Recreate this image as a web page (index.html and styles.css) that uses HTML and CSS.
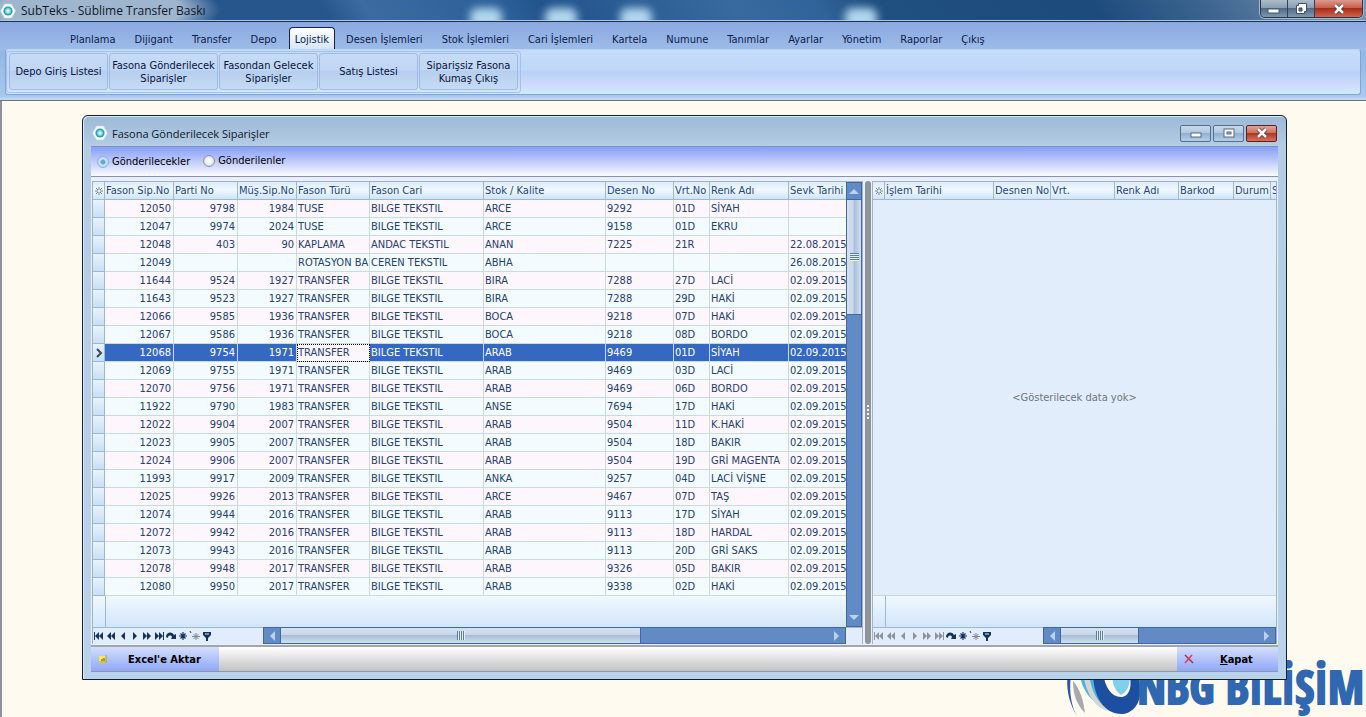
FILE: index.html
```html
<!DOCTYPE html>
<html lang="tr">
<head>
    <meta charset="UTF-8">
    <meta name="viewport" content="width=device-width, initial-scale=1.0">
    <title>SubTeks - Süblime Transfer Baskı</title>
    <link rel="stylesheet" href="styles.css">
</head>
<body>

<!-- Shared icons -->
<svg class="defs" width="0" height="0" aria-hidden="true">
    <symbol id="i-app" viewBox="0 0 16 16">
        <path d="M4.500 1h7l4 7-4 7h-7l-4-7z" fill="#f4fbfc" stroke="#c3d9e2" stroke-width=".6"/>
        <circle cx="8" cy="8" r="4.600" fill="#2f9fae"/>
        <circle cx="8" cy="8" r="3" fill="#7fd3d8"/>
        <path d="M6 8l2-2 2 2-2 2z" fill="#dff6f6"/>
    </symbol>
    <symbol id="i-first" viewBox="0 0 12 10"><path d="M1 1h1v8H1zM6 1v8L2 5zM10 1v8L6 5z"/></symbol>
    <symbol id="i-prevpage" viewBox="0 0 12 10"><path d="M6 1v8L2 5zM10 1v8L6 5z"/></symbol>
    <symbol id="i-prev" viewBox="0 0 12 10"><path d="M8 1v8L4 5z"/></symbol>
    <symbol id="i-next" viewBox="0 0 12 10"><path d="M4 1v8l4-4z"/></symbol>
    <symbol id="i-nextpage" viewBox="0 0 12 10"><path d="M2 1v8l4-4zM6 1v8l4-4z"/></symbol>
    <symbol id="i-last" viewBox="0 0 12 10"><path d="M2 1v8l4-4zM6 1v8l4-4zM10 1h1v8h-1z"/></symbol>
    <symbol id="i-refresh" viewBox="0 0 12 10"><path d="M1 6c0-5 6-6 8-2l2-1v5H6l1-2C6 4 3 4 3 7z"/></symbol>
    <symbol id="i-star" viewBox="0 0 12 10"><path d="M6 1v8M2 5h8M3.500 2.500l5 5M8.500 2.500l-5 5" stroke="currentColor" stroke-width="1.200"/></symbol>
    <symbol id="i-starq" viewBox="0 0 12 10"><path d="M1 0l1 2" stroke="#1f3f7a"/><path d="M7 2v7M3 5.500h8M4.500 3l5 5M9.500 3l-5 5" stroke="#7d8794" stroke-width="1"/></symbol>
    <symbol id="i-stargrid" viewBox="0 0 12 10"><path d="M6 1v8M2 5h8M3 2l6 6M9 2L3 8" stroke="#6f8299" stroke-width="1"/><circle cx="6" cy="5" r="1.200" fill="#e8f2fc"/></symbol>
    <symbol id="i-filter" viewBox="0 0 12 10"><path d="M2 1h8v3L7 7v3H5V7L2 4zM4 2.500v1h4v-1z" fill-rule="evenodd"/></symbol>
</svg>

<header class="titlebar">
    <span class="blob b1"></span><span class="blob b2"></span><span class="blob b3"></span><span class="blob b4"></span>
    <svg class="app-icon"><use href="#i-app"/></svg>
    <span class="title">SubTeks - Süblime Transfer Baskı</span>
    <div class="win-buttons">
        <button type="button" class="wb" aria-label="Simge durumuna küçült">
            <svg width="14" height="12"><rect x="1" y="6" width="11" height="4" fill="#fff" stroke="#455b73"/></svg>
        </button>
        <button type="button" class="wb" aria-label="Önceki boyut">
            <svg width="14" height="14"><path d="M4.500 1.500h8v8h-2v2h-8v-8h2z" fill="#fff" stroke="#3d4f63"/><path d="M5 6h3v3H5z" fill="#536b85" stroke="#3d4f63"/></svg>
        </button>
        <button type="button" class="wb wb-close" aria-label="Kapat">
            <svg width="14" height="12"><path d="M3 2l8 8M11 2l-8 8" stroke="#5d2b2b" stroke-width="4"/><path d="M3 2l8 8M11 2l-8 8" stroke="#fff" stroke-width="2.500"/></svg>
        </button>
    </div>
</header>

<div class="ribbon">
    <nav class="menu">
        <a href="#">Planlama</a>
        <a href="#">Dijigant</a>
        <a href="#">Transfer</a>
        <a href="#">Depo</a>
        <a href="#" class="active">Lojistik</a>
        <a href="#">Desen İşlemleri</a>
        <a href="#">Stok İşlemleri</a>
        <a href="#">Cari İşlemleri</a>
        <a href="#">Kartela</a>
        <a href="#">Numune</a>
        <a href="#">Tanımlar</a>
        <a href="#">Ayarlar</a>
        <a href="#">Yönetim</a>
        <a href="#">Raporlar</a>
        <a href="#">Çıkış</a>
    </nav>
    <div class="panel">
        <div class="group">
            <button type="button">Depo Giriş Listesi</button>
            <button type="button" class="wide">Fasona Gönderilecek<br>Siparişler</button>
            <button type="button">Fasondan Gelecek<br>Siparişler</button>
            <button type="button">Satış Listesi</button>
            <button type="button">Siparişsiz Fasona<br>Kumaş Çıkış</button>
        </div>
    </div>
</div>

<main class="desktop">

    <!-- Company logo on the desktop -->
    <div class="logo">
        <svg width="84" height="64" viewBox="0 0 84 64">
            <path d="M16 0C4 14 2 40 16 63c-10-18-8-44 0-63z" fill="#2459a8"/>
            <path d="M12 28c0 14 4 24 12 32-2-14-5-24-12-32z" fill="#a9a9ad"/>
            <path d="M18 20h20l10 34C32 52 22 40 18 20z" fill="#49b7e0"/>
            <path d="M28 20c2 20 10 32 22 38-12 0-24-12-28-38z" fill="#d8d4d2"/>
            <path d="M32 20c0 24 12 42 30 41 16-2 22-22 14-41h-8c4 14 0 24-8 24-10 0-16-10-18-24z" fill="#1c4f9f"/>
            <path d="M52 18c-2 12 2 20 8 24 8-4 10-14 8-24z" fill="#7fd0ea"/>
        </svg>
        <span>NBG BİLİŞİM</span>
    </div>

    <section class="window">
        <div class="window-title">
            <svg class="app-icon"><use href="#i-app"/></svg>
            <h1>Fasona Gönderilecek Siparişler</h1>
            <div class="mdi-buttons">
                <button type="button" aria-label="Küçült">
                    <svg width="14" height="12"><rect x="2" y="6" width="10" height="4" fill="#fff" stroke="#566a80"/></svg>
                </button>
                <button type="button" aria-label="Büyüt">
                    <svg width="14" height="12"><rect x="2" y="2" width="10" height="8" fill="#fff" stroke="#566a80"/><rect x="5" y="5" width="4" height="2" fill="#9fb9d6" stroke="#566a80"/></svg>
                </button>
                <button type="button" class="close" aria-label="Pencereyi kapat">
                    <svg width="14" height="12"><path d="M3 2l8 8M11 2l-8 8" stroke="#6d3030" stroke-width="4"/><path d="M3 2l8 8M11 2l-8 8" stroke="#fff" stroke-width="2.500"/></svg>
                </button>
            </div>
        </div>

        <div class="options">
            <label class="opt"><input type="radio" name="durum" checked>Gönderilecekler</label>
            <label class="opt"><input type="radio" name="durum">Gönderilenler</label>
        </div>

        <div class="grids">
            <div class="grid grid-left">
                <div class="grid-main">
                    <div class="grid-body">
                        <table>
                            <colgroup>
                                <col class="w12"><col class="w69"><col class="w64"><col class="w59"><col class="w73"><col class="w114"><col class="w122"><col class="w68"><col class="w36"><col class="w79"><col>
                            </colgroup>
                            <thead>
                                <tr><th class="ind"><svg class="ico"><use href="#i-stargrid"/></svg></th><th>Fason Sip.No</th><th>Parti No</th><th>Müş.Sip.No</th><th>Fason Türü</th><th>Fason Cari</th><th>Stok / Kalite</th><th>Desen No</th><th>Vrt.No</th><th>Renk Adı</th><th>Sevk Tarihi</th></tr>
                            </thead>
                            <tbody>
                                <tr><td></td><td>12050</td><td>9798</td><td>1984</td><td>TUSE</td><td>BILGE TEKSTIL</td><td>ARCE</td><td>9292</td><td>01D</td><td>SİYAH</td><td></td></tr>
                                <tr><td></td><td>12047</td><td>9974</td><td>2024</td><td>TUSE</td><td>BILGE TEKSTIL</td><td>ARCE</td><td>9158</td><td>01D</td><td>EKRU</td><td></td></tr>
                                <tr><td></td><td>12048</td><td>403</td><td>90</td><td>KAPLAMA</td><td>ANDAC TEKSTIL</td><td>ANAN</td><td>7225</td><td>21R</td><td></td><td>22.08.2015</td></tr>
                                <tr><td></td><td>12049</td><td></td><td></td><td>ROTASYON BA</td><td>CEREN TEKSTIL</td><td>ABHA</td><td></td><td></td><td></td><td>26.08.2015</td></tr>
                                <tr><td></td><td>11644</td><td>9524</td><td>1927</td><td>TRANSFER</td><td>BILGE TEKSTIL</td><td>BIRA</td><td>7288</td><td>27D</td><td>LACİ</td><td>02.09.2015</td></tr>
                                <tr><td></td><td>11643</td><td>9523</td><td>1927</td><td>TRANSFER</td><td>BILGE TEKSTIL</td><td>BIRA</td><td>7288</td><td>29D</td><td>HAKİ</td><td>02.09.2015</td></tr>
                                <tr><td></td><td>12066</td><td>9585</td><td>1936</td><td>TRANSFER</td><td>BILGE TEKSTIL</td><td>BOCA</td><td>9218</td><td>07D</td><td>HAKİ</td><td>02.09.2015</td></tr>
                                <tr><td></td><td>12067</td><td>9586</td><td>1936</td><td>TRANSFER</td><td>BILGE TEKSTIL</td><td>BOCA</td><td>9218</td><td>08D</td><td>BORDO</td><td>02.09.2015</td></tr>
                                <tr class="selected"><td><svg class="row-arrow" viewBox="0 0 8 10"><path d="M2 1l4 4-4 4" fill="none" stroke="#3a4a5c" stroke-width="2"/></svg></td><td>12068</td><td>9754</td><td>1971</td><td class="focus">TRANSFER</td><td>BILGE TEKSTIL</td><td>ARAB</td><td>9469</td><td>01D</td><td>SİYAH</td><td>02.09.2015</td></tr>
                                <tr><td></td><td>12069</td><td>9755</td><td>1971</td><td>TRANSFER</td><td>BILGE TEKSTIL</td><td>ARAB</td><td>9469</td><td>03D</td><td>LACİ</td><td>02.09.2015</td></tr>
                                <tr><td></td><td>12070</td><td>9756</td><td>1971</td><td>TRANSFER</td><td>BILGE TEKSTIL</td><td>ARAB</td><td>9469</td><td>06D</td><td>BORDO</td><td>02.09.2015</td></tr>
                                <tr><td></td><td>11922</td><td>9790</td><td>1983</td><td>TRANSFER</td><td>BILGE TEKSTIL</td><td>ANSE</td><td>7694</td><td>17D</td><td>HAKİ</td><td>02.09.2015</td></tr>
                                <tr><td></td><td>12022</td><td>9904</td><td>2007</td><td>TRANSFER</td><td>BILGE TEKSTIL</td><td>ARAB</td><td>9504</td><td>11D</td><td>K.HAKİ</td><td>02.09.2015</td></tr>
                                <tr><td></td><td>12023</td><td>9905</td><td>2007</td><td>TRANSFER</td><td>BILGE TEKSTIL</td><td>ARAB</td><td>9504</td><td>18D</td><td>BAKIR</td><td>02.09.2015</td></tr>
                                <tr><td></td><td>12024</td><td>9906</td><td>2007</td><td>TRANSFER</td><td>BILGE TEKSTIL</td><td>ARAB</td><td>9504</td><td>19D</td><td>GRİ MAGENTA</td><td>02.09.2015</td></tr>
                                <tr><td></td><td>11993</td><td>9917</td><td>2009</td><td>TRANSFER</td><td>BILGE TEKSTIL</td><td>ANKA</td><td>9257</td><td>04D</td><td>LACİ VİŞNE</td><td>02.09.2015</td></tr>
                                <tr><td></td><td>12025</td><td>9926</td><td>2013</td><td>TRANSFER</td><td>BILGE TEKSTIL</td><td>ARCE</td><td>9467</td><td>07D</td><td>TAŞ</td><td>02.09.2015</td></tr>
                                <tr><td></td><td>12074</td><td>9944</td><td>2016</td><td>TRANSFER</td><td>BILGE TEKSTIL</td><td>ARAB</td><td>9113</td><td>17D</td><td>SİYAH</td><td>02.09.2015</td></tr>
                                <tr><td></td><td>12072</td><td>9942</td><td>2016</td><td>TRANSFER</td><td>BILGE TEKSTIL</td><td>ARAB</td><td>9113</td><td>18D</td><td>HARDAL</td><td>02.09.2015</td></tr>
                                <tr><td></td><td>12073</td><td>9943</td><td>2016</td><td>TRANSFER</td><td>BILGE TEKSTIL</td><td>ARAB</td><td>9113</td><td>20D</td><td>GRİ SAKS</td><td>02.09.2015</td></tr>
                                <tr><td></td><td>12078</td><td>9948</td><td>2017</td><td>TRANSFER</td><td>BILGE TEKSTIL</td><td>ARAB</td><td>9326</td><td>05D</td><td>BAKIR</td><td>02.09.2015</td></tr>
                                <tr><td></td><td>12080</td><td>9950</td><td>2017</td><td>TRANSFER</td><td>BILGE TEKSTIL</td><td>ARAB</td><td>9338</td><td>02D</td><td>HAKİ</td><td>02.09.2015</td></tr>
                            </tbody>
                        </table>
                        <div class="grid-footer"></div>
                    </div>
                    <div class="vscroll">
                        <button type="button" aria-label="Yukarı"><svg width="10" height="6"><path d="M0 6l5-5 5 5z"/></svg></button>
                        <div class="thumb"><i></i></div>
                        <button type="button" class="end" aria-label="Aşağı"><svg width="10" height="6"><path d="M0 0l5 5 5-5z"/></svg></button>
                    </div>
                </div>
                <div class="grid-nav">
                    <div class="nav-icons">
                        <svg class="ico"><use href="#i-first"/></svg><svg class="ico"><use href="#i-prevpage"/></svg><svg class="ico"><use href="#i-prev"/></svg><svg class="ico"><use href="#i-next"/></svg><svg class="ico"><use href="#i-nextpage"/></svg><svg class="ico"><use href="#i-last"/></svg><svg class="ico"><use href="#i-refresh"/></svg><svg class="ico"><use href="#i-star"/></svg><svg class="ico"><use href="#i-starq"/></svg><svg class="ico"><use href="#i-filter"/></svg>
                    </div>
                    <div class="hscroll">
                        <button type="button" aria-label="Sola"><svg width="6" height="10"><path d="M6 0L1 5l5 5z"/></svg></button>
                        <div class="thumb thumb-long"><i></i></div>
                        <button type="button" class="end" aria-label="Sağa"><svg width="6" height="10"><path d="M0 0l5 5-5 5z"/></svg></button>
                    </div>
                    <div class="corner"></div>
                </div>
            </div>

            <div class="splitter"><i></i></div>

            <div class="grid grid-right">
                <div class="grid-main">
                    <div class="grid-body">
                        <table>
                            <colgroup>
                                <col class="w12"><col class="w109"><col class="w57"><col class="w64"><col class="w64"><col class="w55"><col class="w37"><col>
                            </colgroup>
                            <thead>
                                <tr><th class="ind"><svg class="ico"><use href="#i-stargrid"/></svg></th><th>İşlem Tarihi</th><th>Desnen No</th><th>Vrt.</th><th>Renk Adı</th><th>Barkod</th><th>Durum</th><th>S</th></tr>
                            </thead>
                        </table>
                        <div class="empty">&lt;Gösterilecek data yok&gt;</div>
                        <div class="grid-footer"></div>
                    </div>
                </div>
                <div class="grid-nav">
                    <div class="nav-icons">
                        <svg class="ico off"><use href="#i-first"/></svg><svg class="ico off"><use href="#i-prevpage"/></svg><svg class="ico off"><use href="#i-prev"/></svg><svg class="ico off"><use href="#i-next"/></svg><svg class="ico off"><use href="#i-nextpage"/></svg><svg class="ico off"><use href="#i-last"/></svg><svg class="ico"><use href="#i-refresh"/></svg><svg class="ico"><use href="#i-star"/></svg><svg class="ico"><use href="#i-starq"/></svg><svg class="ico"><use href="#i-filter"/></svg>
                    </div>
                    <div class="hscroll">
                        <button type="button" aria-label="Sola"><svg width="6" height="10"><path d="M6 0L1 5l5 5z"/></svg></button>
                        <div class="thumb"><i></i></div>
                        <button type="button" class="end" aria-label="Sağa"><svg width="6" height="10"><path d="M0 0l5 5-5 5z"/></svg></button>
                    </div>
                </div>
            </div>
        </div>

        <div class="actions">
            <button type="button" class="excel">
                <svg width="12" height="12"><path d="M1 3h7v7H1z" fill="#f5ec4c"/><path d="M1 9h8M8 2v7" stroke="#b09a3a"/><path d="M3 7h2M6 5v3" stroke="#4c4c3c"/></svg>
                <span>Excel'e Aktar</span>
            </button>
            <button type="button" class="exit">
                <svg width="12" height="12"><path d="M2 2l8 8" stroke="#a52a5a" stroke-width="1.500"/><path d="M9 2L2 10" stroke="#e03a4a" stroke-width="1.500"/></svg>
                <span><u>K</u>apat</span>
            </button>
        </div>
    </section>
</main>

</body>
</html>
```

FILE: styles.css
```css
* {
    box-sizing: border-box;
}

body {
    margin: 0;
    min-height: 100vh;
    display: flex;
    flex-direction: column;
    font-family: "DejaVu Sans Condensed", "DejaVu Sans", sans-serif;
    font-size: 11px;
    line-height: 13px;
    color: #0c1c3c;
    background: #fffaf0;
}

button {
    font: inherit;
    color: inherit;
    padding: 0;
    margin: 0;
    cursor: pointer;
}

svg {
    display: block;
}

.defs {
    position: absolute;
}

.app-icon {
    position: relative;
    width: 16px;
    height: 16px;
    flex: none;
}

/* Main title bar */
.titlebar {
    position: relative;
    height: 22px;
    flex: none;
    display: flex;
    align-items: center;
    overflow: hidden;
    border-bottom: 1px solid #1c2f4f;
    box-shadow: inset 0 -1px 0 #a9c6e4;
    background:
        radial-gradient(ellipse 130px 36px at 90px 10px, rgba(172, 192, 214, 0.9) 70%, rgba(172, 192, 214, 0) 100%),
        linear-gradient(60deg, transparent 24%, #3b6ba1 27%, #2d6098 37%, #22548c 40%, #386a9e 54%, #30639a 60%, #20507f 64%, #1d4b7c 80%, #3c648f 88%, #7d98b5 100%),
        #27568c;
}

.title {
    position: relative;
    margin-left: 5px;
    font-family: "Open Sans", "Noto Sans", sans-serif;
    font-size: 12px;
    color: #101828;
}

.blob {
    position: absolute;
    top: 8px;
    width: 32px;
    height: 20px;
    border-radius: 8px;
    background: #b2d6ee;
    filter: blur(4px);
}

.b1 { left: 470px; }
.b2 { left: 545px; }
.b3 { left: 620px; }
.b4 { left: 845px; }

.win-buttons {
    position: relative;
    display: flex;
    align-self: flex-start;
    height: 18px;
    margin-left: auto;
    margin-right: 3px;
    border: 1px solid #23364e;
    border-top: none;
    border-radius: 0 0 5px 5px;
    box-shadow: 0 0 0 1px #a8b9cb;
    overflow: hidden;
}

.wb {
    width: 27px;
    display: flex;
    align-items: center;
    justify-content: center;
    border: none;
    border-right: 1px solid #2f435c;
    background: linear-gradient(#aebccb 0, #8c9eb3 45%, #536b87 50%, #7f97ae 100%);
}

.wb-close {
    width: 47px;
    border-right: none;
    background: linear-gradient(#dc9a8c 0, #c8604c 45%, #a82c18 50%, #d0644c 100%);
}

/* Ribbon */
.ribbon {
    flex: none;
    height: 79px;
    padding: 5px 5px 0;
    background: linear-gradient(#8aa9e0 0, #9dbbe8 27px, #94b8e4 30px, #a6c8ee 74px, #c6dcf4 78px);
    border-bottom: 1px solid #6c7078;
}

.menu {
    display: flex;
    height: 22px;
    padding-left: 56px;
    white-space: nowrap;
}

.menu a {
    padding: 6px 10px 0 9px;
    color: #0c1c4c;
    text-decoration: none;
}

.menu .active {
    padding: 5px 5px 0;
    margin: 0 2px;
    border: 1px solid #152447;
    border-bottom: none;
    border-radius: 4px 4px 0 0;
    background: linear-gradient(#fff, #d5e5fa);
}

.panel {
    height: 46px;
    border: 1px solid #7ea6d2;
    border-top-color: #b9d4f4;
    border-radius: 3px;
    background: linear-gradient(#c5dcfb 0, #c0d8f8 45%, #bad0f8 50%, #cedcfc 80%, #cdeafc 100%);
}

.group {
    display: inline-flex;
    gap: 1px;
    margin: 1px 0 0;
    padding: 1px 2px 2px;
    border: 1px solid #a5c2e6;
    border-radius: 3px;
}

.group button {
    width: 99px;
    height: 37px;
    border: 1px solid #9fbce0;
    border-radius: 3px;
    color: #08143c;
    background: linear-gradient(#c6dbf6 0, #c0d6f3 45%, #b6ceef 50%, #c6dbf4 100%);
    white-space: nowrap;
}

.group .wide {
    width: 109px;
}

/* Desktop */
.desktop {
    position: relative;
    flex: 1;
    display: flex;
    border-left: 2px solid #8b9099;
    overflow: hidden;
}

.logo {
    position: absolute;
    right: 2px;
    bottom: 0;
    display: flex;
    align-items: flex-end;
    color: #2f68b0;
    font-family: "Liberation Sans Narrow", "Open Sans Condensed", "Liberation Sans", sans-serif;
    font-size: 46px;
    line-height: 62px;
    font-weight: bold;
    white-space: nowrap;
    -webkit-text-stroke: 2px #2f68b0;
}

.logo svg {
    margin-right: -8px;
}

/* Child window */
.window {
    position: relative;
    flex: 1;
    min-width: 0;
    display: flex;
    flex-direction: column;
    margin: 14px 79px 37px 80px;
    padding: 0 8px 7px;
    border: 1px solid #10202c;
    border-radius: 6px 6px 0 0;
    background: linear-gradient(#9db9d6 0, #b4cce4 30px, #b9d3ea 100%);
    box-shadow: inset 1px 1px 0 #dcebf8;
}

.window-title {
    flex: none;
    display: flex;
    align-items: center;
    height: 30px;
    padding: 4px 1px 0;
}

.window-title h1 {
    margin: 0 0 0 4px;
    font-family: "Open Sans", "Noto Sans", sans-serif;
    font-size: 11px;
    font-weight: normal;
    color: #101828;
}

.mdi-buttons {
    display: flex;
    gap: 2px;
    margin-left: auto;
}

.mdi-buttons button {
    display: flex;
    align-items: center;
    justify-content: center;
    width: 31px;
    height: 17px;
    border: 1px solid #54708f;
    border-radius: 2px;
    background: linear-gradient(#c8daec 0, #b0c8e0 45%, #92b0d0 50%, #b4cee6 100%);
}

.mdi-buttons .close {
    border-color: #5c1f1f;
    background: linear-gradient(#e0a498 0, #cc7060 45%, #b03824 50%, #d4745c 100%);
}

.options {
    flex: none;
    display: flex;
    gap: 13px;
    height: 31px;
    padding: 7px 6px 0;
    border-top: 1px solid #7f92b8;
    border-bottom: 1px solid #8a93a4;
    background: linear-gradient(#869ff8 0, #b4c2fa 40%, #fbfbff 100%);
}

.opt {
    display: flex;
    align-items: center;
    height: 13px;
    color: #000;
}

.opt:first-child {
    margin-top: 1px;
}

.opt input {
    appearance: none;
    width: 12px;
    height: 12px;
    margin: 0 3px 0 0;
    border: 1px solid #8d959e;
    border-radius: 50%;
    background: radial-gradient(#fff 20%, #d4d8dc 80%);
}

.opt input:checked {
    border-color: #8fb4dc;
    background: radial-gradient(#5fa8d8 25%, #cfe8fa 45%, #a6cdf0 90%);
}

/* Grids */
.grids {
    flex: 1;
    display: flex;
    padding: 4px 1px 1px;
    background: #e9f0fb;
    border-bottom: 2px solid #a0a5b0;
}

.grid {
    display: flex;
    flex-direction: column;
    border: 1px solid #9fb2c6;
    border-bottom: none;
    background: #e2edfc;
    color: #24406f;
}

.grid-left {
    flex: 0 0 771px;
}

.grid-right {
    flex: 1;
    min-width: 0;
}

.grid-main {
    flex: 1;
    display: flex;
    min-width: 0;
}

.grid-body {
    flex: 1;
    min-width: 0;
    display: flex;
    flex-direction: column;
}

table {
    width: 100%;
    table-layout: fixed;
    border-collapse: separate;
    border-spacing: 0;
}

.w12 { width: 12px; }
.w36 { width: 36px; }
.w37 { width: 37px; }
.w55 { width: 55px; }
.w57 { width: 57px; }
.w59 { width: 59px; }
.w64 { width: 64px; }
.w68 { width: 68px; }
.w69 { width: 69px; }
.w73 { width: 73px; }
.w79 { width: 79px; }
.w109 { width: 109px; }
.w114 { width: 114px; }
.w122 { width: 122px; }

th, td {
    height: 18px;
    padding: 0 0 0 1px;
    overflow: hidden;
    white-space: nowrap;
    text-align: left;
    border-right: 1px solid #c9dbe2;
    border-bottom: 1px solid #c9dbe2;
}

th {
    font-weight: normal;
    color: #1f4480;
    border-color: #9db8cf;
    background: linear-gradient(#dcebfa, #f0f8ff 45%, #cfe4f8);
}

th.ind {
    padding: 0;
}

th:last-child, td:last-child {
    border-right: none;
}

tbody tr:nth-child(odd) {
    background: #fdf6fd;
}

tbody tr:nth-child(even) {
    background: #f3fbff;
}

td:first-child {
    padding: 0 2px;
    border-color: #9db8cf;
    background: linear-gradient(#e8f3fd, #c9dff5);
}

td:nth-child(2), td:nth-child(3), td:nth-child(4) {
    text-align: right;
    padding-right: 2px;
}

tbody tr.selected {
    background: #3568c0;
    color: #fff;
}

.selected .focus {
    background: #fdf6fd;
    color: #24406f;
    outline: 1px dotted #000;
    outline-offset: -1px;
}

.row-arrow {
    width: 8px;
    height: 10px;
}

.grid-footer {
    flex: 1;
    min-height: 31px;
    background: linear-gradient(#f0f8ff, #d2e6fa);
}

.grid-footer::before {
    content: "";
    display: block;
    width: 12px;
    height: 100%;
    min-height: 31px;
    border-right: 1px solid #9db8cf;
}

.grid-right .grid-footer {
    flex: none;
    border-top: 1px solid #c0d8e6;
}

.empty {
    flex: 1;
    display: flex;
    align-items: center;
    justify-content: center;
    color: #70747c;
}

.grid-nav {
    flex: none;
    display: flex;
    height: 17px;
    border-top: 1px solid #9db8cf;
}

.nav-icons {
    display: flex;
    align-items: center;
    width: 170px;
    flex: none;
}

.ico {
    width: 12px;
    height: 10px;
    fill: currentColor;
    color: #12335f;
}

.off {
    color: #8c939c;
}

.corner {
    width: 16px;
}

/* Scroll bars */
.hscroll, .vscroll {
    display: flex;
    background: #628bc5;
    border: 1px solid #3e689f;
}

.hscroll {
    flex: 1;
    margin-top: -1px;
}

.vscroll {
    flex: none;
    flex-direction: column;
    width: 16px;
}

.hscroll button, .vscroll button {
    display: flex;
    align-items: center;
    justify-content: center;
    border: none;
    background: none;
    fill: #b9d2f2;
}

.hscroll button {
    width: 16px;
}

.vscroll button {
    height: 16px;
}

.hscroll .end {
    margin-left: auto;
}

.vscroll .end {
    margin-top: auto;
}

.thumb {
    display: flex;
    align-items: center;
    justify-content: center;
}

.hscroll .thumb {
    width: 79px;
    border: solid #3e689f;
    border-width: 0 1px;
    background: linear-gradient(#d6e2f0, #c8d6e8 45%, #a9bdd6 50%, #cfe0f4);
}

.hscroll .thumb-long {
    width: 361px;
}

.vscroll .thumb {
    height: 116px;
    border: solid #3e689f;
    border-width: 1px 0;
    background: linear-gradient(90deg, #d6e2f0, #c8d6e8 45%, #a9bdd6 50%, #cfe0f4);
}

.hscroll i {
    width: 8px;
    height: 9px;
    background: repeating-linear-gradient(90deg, #5b7ba8 0 1px, #e6eef8 1px 2px);
}

.vscroll i {
    width: 9px;
    height: 8px;
    background: repeating-linear-gradient(#5b7ba8 0 1px, #e6eef8 1px 2px);
}

.splitter {
    flex: none;
    display: flex;
    align-items: center;
    justify-content: center;
    width: 6px;
    margin: 0 1px 0 2px;
    border-radius: 3px;
    background: #8f9499;
}

.splitter i {
    width: 2px;
    height: 15px;
    background: repeating-linear-gradient(#f0f0f0 0 2px, transparent 2px 4px);
}

/* Bottom bar */
.actions {
    flex: none;
    display: flex;
    justify-content: space-between;
    height: 25px;
    border-bottom: 1px solid #8f98a8;
    background: linear-gradient(#fff, #c2c2c4);
}

.actions button {
    display: flex;
    align-items: center;
    border: none;
    font-weight: bold;
    color: #000;
    background: linear-gradient(#d4defc, #8fa8f8);
}

.excel {
    width: 128px;
}

.excel svg {
    margin: 0 18px 0 7px;
}

.exit {
    width: 101px;
}

.exit svg {
    margin: 0 25px 0 6px;
}
```
